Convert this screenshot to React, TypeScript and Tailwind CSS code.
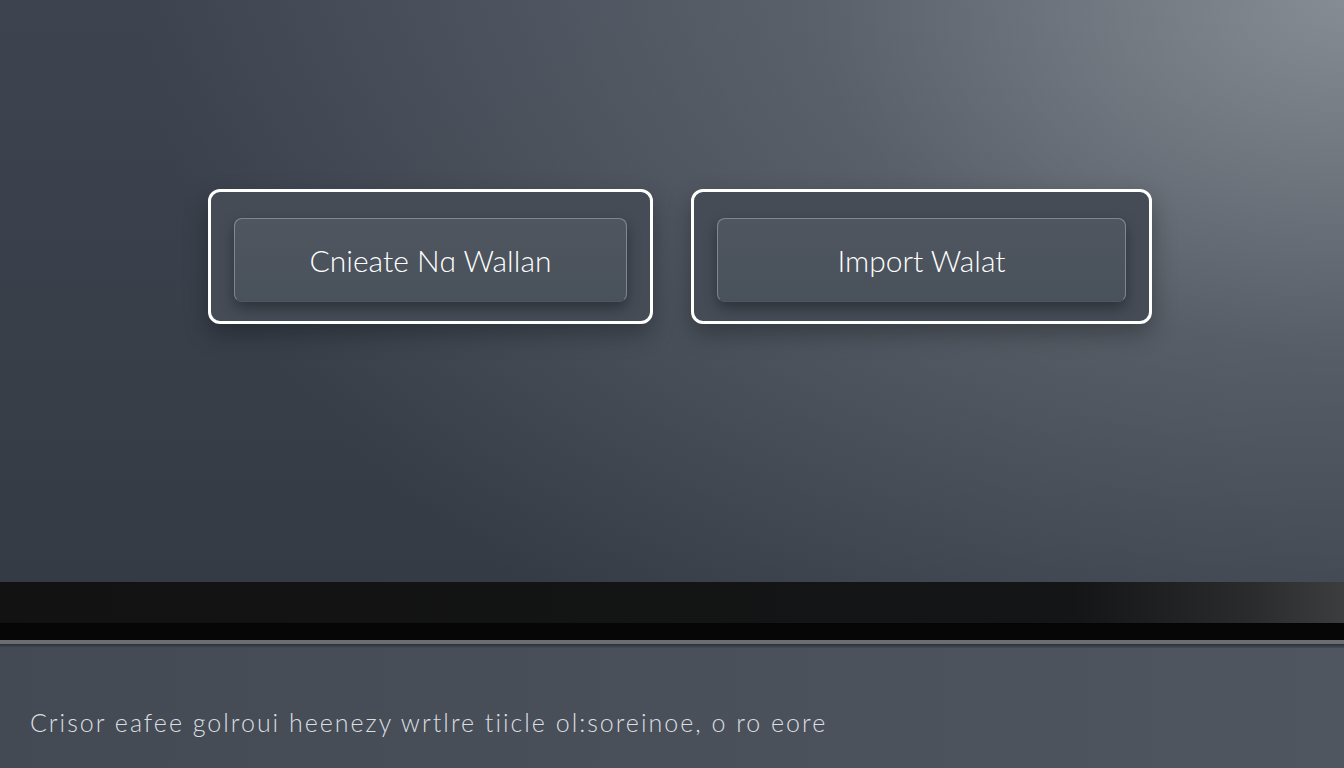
type WalletButtonProps = {
  label: string;
  width: string;
};

const WalletButton = ({ label, width }: WalletButtonProps) => (
  <div
    className={`${width} h-[135px] rounded-[12px] border-[3px] border-white bg-[#454c56] pt-[26px] pr-[23px] pb-[19px] pl-[23px] shadow-[0_10px_24px_rgba(0,0,0,0.3)]`}
  >
    <button
      type="button"
      className="flex h-[84px] w-full items-center justify-center rounded-[8px] border border-white/30 border-b-transparent bg-[linear-gradient(180deg,#4f5660,#49515b)] shadow-[0_6px_14px_rgba(0,0,0,0.35)]"
    >
      <span className="font-['Lato','Liberation_Sans',sans-serif] text-[30px] font-light text-white">
        {label}
      </span>
    </button>
  </div>
);

export default function App() {
  return (
    <div className="flex h-[768px] w-[1344px] flex-col overflow-hidden bg-[#454c56]">
      <section className="h-[582px] bg-[radial-gradient(ellipse_1500px_1000px_at_100%_0%,rgba(134,140,147,1),rgba(134,140,147,0.4)_35%,rgba(134,140,147,0)_80%),linear-gradient(180deg,#3d4450,#343b44)]">
        <div className="flex gap-[38px] pt-[189px] pl-[208px]">
          <WalletButton label="Cnieate Nɑ Wallan" width="w-[445px]" />
          <WalletButton label="Import Walat" width="w-[461px]" />
        </div>
      </section>

      {/* dark ledge between the two panels */}
      <div className="h-[41px] bg-[linear-gradient(90deg,#121212_0%,#141516_80%,#2a2b2c_93%,#3c3d3f_100%)]" />
      <div className="h-[1px] bg-[#050505]" />
      <div className="h-[16px] bg-[#060606]" />
      <div className="h-[4px] bg-[#6b6d71]" />
      <div className="h-[4px] bg-[linear-gradient(180deg,#2c3138,#454c56)]" />

      <section className="flex flex-1 items-start bg-[linear-gradient(90deg,#434a54,#4f565f)] pt-[56px] pl-[30px]">
        <p className="font-['Lato','Liberation_Sans',sans-serif] text-[25px] font-light tracking-[2px] text-[#dcdee1]">
          Crisor eafee golroui heenezy wrtlre tiicle ol:soreinoe, o ro eore
        </p>
      </section>
    </div>
  );
}
